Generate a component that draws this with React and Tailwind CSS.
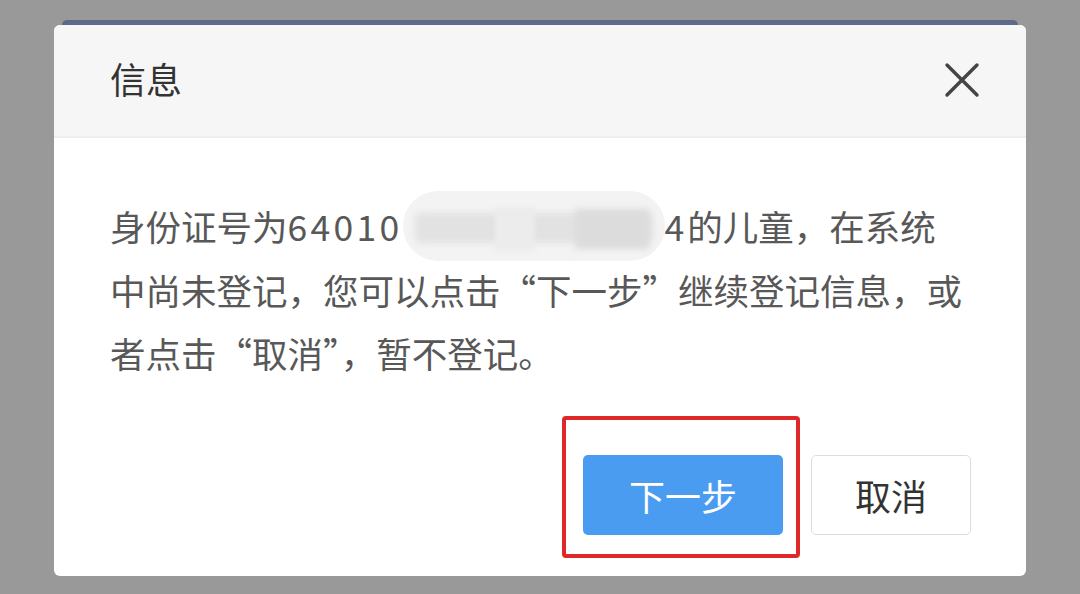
import React from "react";

const cjk = { fontFamily: '"Noto Sans CJK SC", "Noto Sans", sans-serif' };

export default function App() {
  return (
    <div className="w-[1080px] h-[594px] bg-[#999999] overflow-hidden flex flex-col" style={cjk}>
      <div className="mt-[20px] h-[5px] mx-[62px] rounded-t-[8px] bg-[#5d6b88]" />
      <div className="mx-[54px] w-[972px] h-[551px] bg-white rounded-[6px] overflow-hidden flex flex-col">
        <div className="h-[113px] bg-[#f6f6f6] border-b-2 border-[#eeeeee] flex items-center justify-between pl-[56px] pr-[46px] shrink-0">
          <span className="text-[36px] leading-none text-[#333333] -mt-[6px]">信息</span>
          <svg width="36" height="36" viewBox="0 0 36 36" className="-mt-[2px]">
            <path d="M3 3 L33 33 M33 3 L3 33" stroke="#444" strokeWidth="3.4" strokeLinecap="round" />
          </svg>
        </div>
        <div className="pl-[56px] pr-[30px] pt-[56px] text-[35.5px] leading-[63.5px] text-[#585858]">
          <div className="flex items-center whitespace-nowrap h-[63.5px]">
            <span>身份证号为</span>
            <span className="tracking-[3.3px]">64010</span>
            <span className="relative inline-block w-[262px] h-[70px] my-[-4px] rounded-full bg-[#f3f3f3] overflow-hidden">
              <span className="absolute left-[12px] right-[12px] top-[22px] h-[30px] rounded-[6px] bg-[#e2e2e2] blur-[3px]" />
              <span className="absolute left-[92px] w-[40px] top-[16px] h-[44px] bg-[#ececec] blur-[2px]" />
              <span className="absolute left-[172px] w-[74px] top-[18px] h-[40px] bg-[#dcdcdc] blur-[3px]" />
            </span>
            <span className="tracking-[3px]">4</span>
            <span>的儿童，在系统</span>
          </div>
          <div className="whitespace-nowrap">中尚未登记，您可以点击“下一步”继续登记信息，或</div>
          <div className="whitespace-nowrap">者点击“取消”，暂不登记。</div>
        </div>
        <div className="mt-auto mb-[41px] flex justify-end gap-[28px] pr-[55px]">
          <div className="relative">
            <button className="w-[200px] h-[80px] rounded-[5px] bg-[#4a9cf1] text-white text-[36px] leading-none">下一步</button>
            <div className="absolute -left-[21px] -top-[39px] w-[238px] h-[142px] border-[4px] border-[#e0282a] rounded-[4px] pointer-events-none" />
          </div>
          <button className="w-[160px] h-[80px] rounded-[5px] bg-white border border-[#dddddd] text-[#333333] text-[36px] leading-none">取消</button>
        </div>
      </div>
    </div>
  );
}
